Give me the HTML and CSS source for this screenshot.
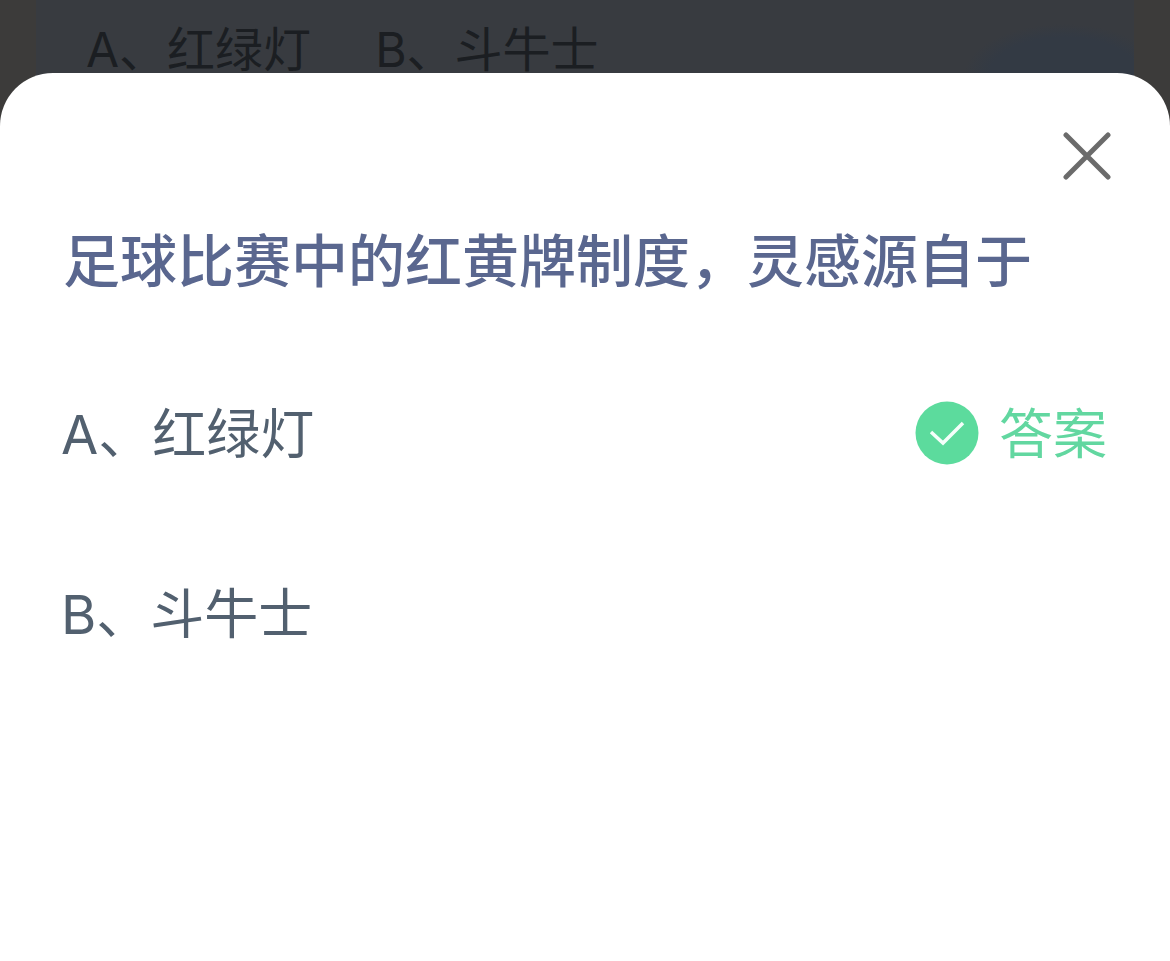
FILE: index.html
```html
<!DOCTYPE html>
<html lang="zh-CN">
<head>
<meta charset="utf-8">
<meta name="viewport" content="width=device-width, initial-scale=1">
<title>答案</title>
<link rel="stylesheet" href="styles.css">
</head>
<body>
<div class="page">
  <div class="backdrop" aria-hidden="true">
    <div class="backdrop-card"><span>A、红绿灯</span><span>B、斗牛士</span></div>
  </div>
  <main class="sheet" role="dialog" aria-labelledby="question">
    <button class="close" type="button" aria-label="关闭">
      <svg viewBox="0 0 48 48" width="48" height="48"><path d="M3 3L45 45M45 3L3 45" fill="none" stroke="#6b6b6b" stroke-width="5" stroke-linecap="round"/></svg>
    </button>
    <h1 class="question" id="question">足球比赛中的红黄牌制度，灵感源自于</h1>
    <ul class="options">
      <li class="option">
        <span>A、红绿灯</span>
        <span class="answer">
          <svg class="answer-icon" viewBox="0 0 64 64" width="64" height="64"><circle cx="32" cy="32" r="31.500" fill="#5cdb9d"/><path d="M16 31L28 42L48 22" fill="none" stroke="#f4fffa" stroke-width="3.500"/></svg>
          答案
        </span>
      </li>
      <li class="option"><span>B、斗牛士</span></li>
    </ul>
  </main>
</div>
</body>
</html>
```
FILE: styles.css
```css
* { box-sizing: border-box; }
body { margin: 0; font-family: Inter, "Noto Sans CJK SC", sans-serif; }
.page { min-height: 100vh; display: flex; flex-direction: column; background: #3c3b3a; }
.backdrop { height: 126px; padding: 0 36px; background: #3c3b3a; }
.backdrop-card {
  height: 100%;
  padding: 14px 50px;
  display: flex;
  gap: 64px;
  background: radial-gradient(ellipse 100px 52px at calc(100% - 70px) 76px, #333a44 75%, transparent 100%), #383b40;
  color: #1b1e22;
  font-size: 48px;
  line-height: 72px;
}
.sheet { flex: 1; margin-top: -53px; padding: 59px 59px 60px 61px; background: #fff; border-radius: 53px 53px 0 0; display: flex; flex-direction: column; }
.close { align-self: flex-end; display: flex; padding: 0; border: 0; background: none; cursor: pointer; }
.question { margin: 40px 0 0; padding-left: 2px; color: #5a678f; font-size: 57px; line-height: 84px; font-weight: 500; }
.options { margin: 91px 0 0; padding: 0; list-style: none; display: flex; flex-direction: column; gap: 100px; }
.option { display: flex; justify-content: space-between; align-items: center; color: #52606f; font-size: 54px; line-height: 80px; }
.answer { display: flex; align-items: center; gap: 20px; padding-right: 4px; color: #62d7a0; }
.answer-icon { margin-bottom: 4px; }
```
